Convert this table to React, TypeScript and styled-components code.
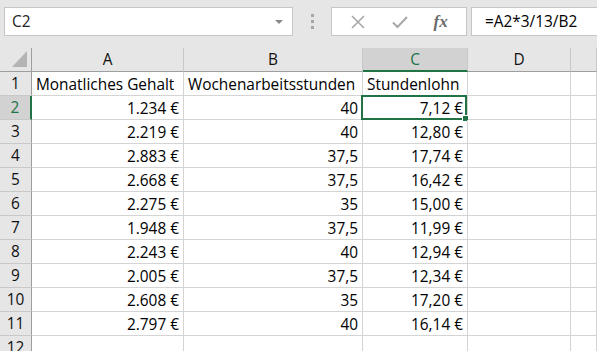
import React from 'react';
import styled, { createGlobalStyle } from 'styled-components';

const GlobalStyle = createGlobalStyle`
    body{
        margin:0;
        background:#fff;
        font-family:"Open Sans", "Liberation Sans", sans-serif;
    }
`;

const Page = styled.div`
    width:597px;
    height:351px;
    overflow:hidden;
    background:#fff;
`;

const FormulaBar = styled.div`
    height:48px;
    box-sizing:border-box;
    background:#e6e6e6;
    display:flex;
    align-items:flex-start;
    padding:7px 0 0 4px;
`;

const NameBox = styled.div`
    width:289px;
    height:29px;
    box-sizing:border-box;
    background:#fff;
    border:1px solid #c6c6c6;
    display:flex;
    align-items:center;
    justify-content:space-between;
    padding:0 9px 0 7px;
    font-size:15.4px;
    color:#222;
`;

const DropArrow = styled.div`
    width:0;
    height:0;
    border-left:4px solid transparent;
    border-right:4px solid transparent;
    border-top:4px solid #8a8a8a;
`;

const Grip = styled.div`
    width:38px;
    height:29px;
    display:flex;
    flex-direction:column;
    align-items:center;
    justify-content:center;
    gap:3px;
    >span{
        width:3px;
        height:3px;
        background:#a6a6a6;
    }
`;

const ButtonBox = styled.div`
    width:136px;
    height:29px;
    box-sizing:border-box;
    background:#fff;
    border:1px solid #c6c6c6;
    display:flex;
    align-items:center;
    justify-content:space-around;
    padding:0 6px;
`;

const Fx = styled.span`
    font-family:"Liberation Serif", serif;
    font-style:italic;
    font-weight:bold;
    font-size:17px;
    color:#6b6b6b;
`;

const FormulaInput = styled.div`
    flex:1;
    height:29px;
    margin-left:4px;
    box-sizing:border-box;
    background:#fff;
    border:1px solid #c6c6c6;
    border-right:none;
    display:flex;
    align-items:center;
    padding-left:13px;
    font-size:15.4px;
    color:#000;
`;

const Grid = styled.div`
    display:grid;
    grid-template-columns:32px 152px 179px 105px 103px 1fr;
    grid-auto-rows:24px;
    font-size:15.4px;
    color:#000;
`;

const HeadCell = styled.div<{ $active?: boolean }>`
    background:${p => p.$active ? '#d2d2d2' : '#e6e6e6'};
    color:${p => p.$active ? '#217346' : '#111'};
    border-right:1px solid #c8c8c8;
    border-bottom:${p => p.$active ? '2px solid #217346' : '1px solid #9e9e9e'};
    display:flex;
    align-items:center;
    justify-content:center;
    box-sizing:border-box;
`;

const Corner = styled.div`
    background:#e6e6e6;
    border-right:1px solid #9e9e9e;
    border-bottom:1px solid #9e9e9e;
    box-sizing:border-box;
    display:flex;
    align-items:flex-end;
    justify-content:flex-end;
    padding:0 4px 4px 0;
    >div{
        width:0;
        height:0;
        border-left:15px solid transparent;
        border-bottom:16px solid #b4b4b4;
    }
`;

const RowHead = styled.div<{ $active?: boolean }>`
    background:${p => p.$active ? '#d2d2d2' : '#e6e6e6'};
    color:${p => p.$active ? '#217346' : '#111'};
    border-right:${p => p.$active ? '2px solid #217346' : '1px solid #9e9e9e'};
    border-bottom:1px solid #c8c8c8;
    box-sizing:border-box;
    display:flex;
    align-items:center;
    justify-content:center;
`;

const Cell = styled.div<{ $num?: boolean }>`
    position:relative;
    border-right:1px solid #d4d4d4;
    border-bottom:1px solid #d4d4d4;
    box-sizing:border-box;
    display:flex;
    align-items:center;
    justify-content:${p => p.$num ? 'flex-end' : 'flex-start'};
    padding:1px 4px 0 4px;
    white-space:nowrap;
`;

const Selection = styled.div`
    position:absolute;
    top:-1px;
    left:-2px;
    right:0;
    bottom:-1px;
    border:2px solid #217346;
    pointer-events:none;
    >span{
        position:absolute;
        right:-4px;
        bottom:-4px;
        width:5px;
        height:5px;
        background:#217346;
        border:1px solid #fff;
    }
`;

const rows = [
    ['1.234 €', '40', '7,12 €'],
    ['2.219 €', '40', '12,80 €'],
    ['2.883 €', '37,5', '17,74 €'],
    ['2.668 €', '37,5', '16,42 €'],
    ['2.275 €', '35', '15,00 €'],
    ['1.948 €', '37,5', '11,99 €'],
    ['2.243 €', '40', '12,94 €'],
    ['2.005 €', '37,5', '12,34 €'],
    ['2.608 €', '35', '17,20 €'],
    ['2.797 €', '40', '16,14 €'],
];

const App: React.FC = () => {
    return <Page>
        <GlobalStyle />
        <FormulaBar>
            <NameBox>C2<DropArrow /></NameBox>
            <Grip><span /><span /><span /></Grip>
            <ButtonBox>
                <svg width="16" height="16" viewBox="0 0 16 16">
                    <path d="M2 2 L14 14 M14 2 L2 14" stroke="#a8a8a8" strokeWidth="1.6" fill="none" />
                </svg>
                <svg width="18" height="16" viewBox="0 0 18 16">
                    <path d="M2 8.5 L6.5 13 L16 3" stroke="#a8a8a8" strokeWidth="2" fill="none" />
                </svg>
                <Fx>fx</Fx>
            </ButtonBox>
            <FormulaInput>=A2*3/13/B2</FormulaInput>
        </FormulaBar>
        <Grid>
            <Corner><div /></Corner>
            <HeadCell>A</HeadCell>
            <HeadCell>B</HeadCell>
            <HeadCell $active>C</HeadCell>
            <HeadCell>D</HeadCell>
            <HeadCell />

            <RowHead>1</RowHead>
            <Cell>Monatliches Gehalt</Cell>
            <Cell>Wochenarbeitsstunden</Cell>
            <Cell>Stundenlohn</Cell>
            <Cell />
            <Cell />

            {rows.map((r, i) => <React.Fragment key={i}>
                <RowHead $active={i === 0}>{i + 2}</RowHead>
                <Cell $num>{r[0]}</Cell>
                <Cell $num>{r[1]}</Cell>
                <Cell $num>
                    {r[2]}
                    {i === 0 ? <Selection><span /></Selection> : null}
                </Cell>
                <Cell />
                <Cell />
            </React.Fragment>)}

            <RowHead>12</RowHead>
            <Cell />
            <Cell />
            <Cell />
            <Cell />
            <Cell />
        </Grid>
    </Page>
}

export default App;
